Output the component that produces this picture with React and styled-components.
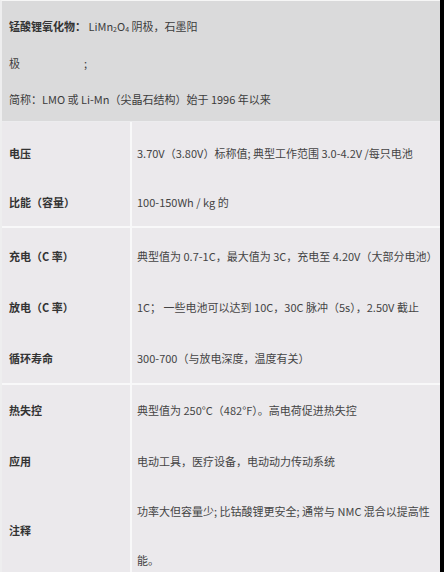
import React from "react";
import styled, { createGlobalStyle } from "styled-components";

const GlobalStyle = createGlobalStyle`
  html, body {
    margin: 0;
    padding: 0;
    background: #000;
    overflow: hidden;
  }
  body {
    font-family: "Noto Sans CJK SC", "Noto Sans", sans-serif;
    font-size: 11px;
    color: #3c3c3c;
  }
`;

const Sheet = styled.div`
  width: 440px;
  box-sizing: border-box;
  background: #ebe9ec;
  border-left: 2px solid #eeeeef;
  border-top: 1px solid #f6f6f6;
`;

const Intro = styled.div`
  background: #dadadb;
  padding: 7px 0 3.5px 7px;
  border-bottom: 1px solid #ececee;
  line-height: 36.5px;
`;

const IntroLine = styled.p`
  margin: 0;
  white-space: nowrap;
`;

const Strong = styled.b`
  font-weight: 700;
  color: #333;
`;

const Semi = styled.span`
  margin-left: ${(props) => props.$gap}px;
`;

const Sub = styled.sub`
  font-size: 7px;
  vertical-align: -1px;
  line-height: 0;
`;

const Row = styled.div`
  display: grid;
  grid-template-columns: 130px 1fr;
  box-sizing: border-box;
  height: ${(props) => (props.$h ? `${props.$h}px` : "auto")};
  border-bottom: ${(props) => (props.$end ? "2px solid #f8f8f9" : "none")};

  & > * {
    padding-top: ${(props) => props.$top || 0}px;
  }
`;

const Label = styled.div`
  display: flex;
  align-items: center;
  box-sizing: border-box;
  padding-left: 7px;
  padding-bottom: ${(props) => props.$lift || 0}px;
  border-right: 2px solid #f8f8f9;
  font-weight: 700;
  color: #333;
  white-space: nowrap;
`;

const Value = styled.div`
  display: flex;
  align-items: center;
  padding-left: 5px;
  white-space: nowrap;
  color: #444;
`;

const Note = styled.div`
  padding-left: 5px;
  line-height: 49px;
  white-space: nowrap;
  color: #444;
`;

const rows = [
  { label: "电压", value: "3.70V（3.80V）标称值; 典型工作范围 3.0-4.2V /每只电池", h: 55, top: 6 },
  { label: "比能（容量）", value: "100-150Wh / kg 的", h: 51, end: true },
  { label: "充电（C 率）", value: "典型值为 0.7-1C，最大值为 3C，充电至 4.20V（大部分电池）", h: 53, top: 2 },
  { label: "放电（C 率）", value: "1C；  一些电池可以达到 10C，30C 脉冲（5s），2.50V 截止", h: 51 },
  { label: "循环寿命", value: "300-700（与放电深度，温度有关）", h: 53, end: true },
  { label: "热失控", value: "典型值为 250°C（482°F）。高电荷促进热失控", h: 50 },
  { label: "应用", value: "电动工具，医疗设备，电动动力传动系统", h: 52 },
];

export default function App() {
  return (
    <>
      <GlobalStyle />
      <Sheet>
        <Intro>
          <IntroLine>
            <Strong>锰酸锂氧化物：</Strong> LiMn<Sub>2</Sub>O<Sub>4</Sub> 阴极，石墨阳
          </IntroLine>
          <IntroLine>
            极<Semi $gap={64}>;</Semi>
          </IntroLine>
          <IntroLine>简称：LMO 或 Li-Mn（尖晶石结构）始于 1996 年以来</IntroLine>
        </Intro>
        {rows.map((row) => (
          <Row key={row.label} $h={row.h} $top={row.top} $end={row.end}>
            <Label>{row.label}</Label>
            <Value>{row.value}</Value>
          </Row>
        ))}
        <Row>
          <Label $lift={12}>注释</Label>
          <Note>
            功率大但容量少; 比钴酸锂更安全; 通常与 NMC 混合以提高性
            <br />
            能。
          </Note>
        </Row>
      </Sheet>
    </>
  );
}
